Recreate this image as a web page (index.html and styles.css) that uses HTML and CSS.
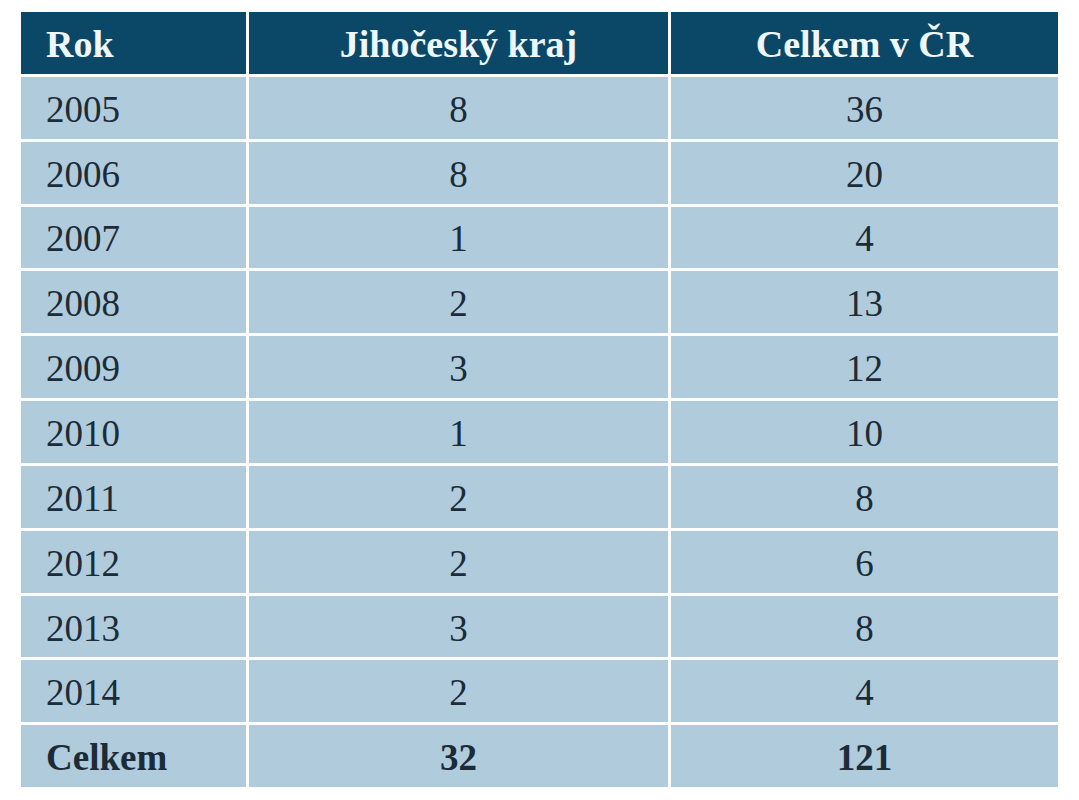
FILE: index.html
```html
<!DOCTYPE html>
<html lang="cs">
<head>
<meta charset="utf-8">
<title>Tabulka</title>
<link rel="stylesheet" href="styles.css">
</head>
<body>
<table class="data">
  <colgroup>
    <col class="c1"><col class="c2"><col class="c3">
  </colgroup>
  <thead>
    <tr><th class="first">Rok</th><th>Jihočeský kraj</th><th>Celkem v ČR</th></tr>
  </thead>
  <tbody>
    <tr><td class="first">2005</td><td>8</td><td>36</td></tr>
    <tr><td class="first">2006</td><td>8</td><td>20</td></tr>
    <tr><td class="first">2007</td><td>1</td><td>4</td></tr>
    <tr><td class="first">2008</td><td>2</td><td>13</td></tr>
    <tr><td class="first">2009</td><td>3</td><td>12</td></tr>
    <tr><td class="first">2010</td><td>1</td><td>10</td></tr>
    <tr><td class="first">2011</td><td>2</td><td>8</td></tr>
    <tr><td class="first">2012</td><td>2</td><td>6</td></tr>
    <tr><td class="first">2013</td><td>3</td><td>8</td></tr>
    <tr><td class="first">2014</td><td>2</td><td>4</td></tr>
    <tr class="total"><td class="first">Celkem</td><td>32</td><td>121</td></tr>
  </tbody>
</table>
</body>
</html>
```
FILE: styles.css
```css
html, body {
  margin: 0;
  padding: 0;
  background: #ffffff;
}
body {
  padding: 9px 0 0 18px;
  font-family: "Times New Roman", Times, "Liberation Serif", "DejaVu Serif", serif;
}
.data {
  border-collapse: separate;
  border-spacing: 3px;
  table-layout: fixed;
  width: 1043px;
  font-family: "Times New Roman", Times, "Liberation Serif", "DejaVu Serif", serif;
  font-size: 37px;
  color: #1b2c38;
}
.c1 { width: 225px; }
.c2 { width: 419px; }
.c3 { width: 387px; }
.data tr {
  height: 61.85px;
}
.data th, .data td {
  padding: 3px 0 0 0;
  text-align: center;
  vertical-align: middle;
  line-height: 1;
}
.data th {
  background: #0b4868;
  color: #eef7fb;
  font-weight: bold;
  font-size: 38px;
}
.data td {
  background: #afcbdc;
}
.data .first {
  text-align: left;
  padding-left: 25px;
}
.total td {
  font-weight: bold;
}
```
